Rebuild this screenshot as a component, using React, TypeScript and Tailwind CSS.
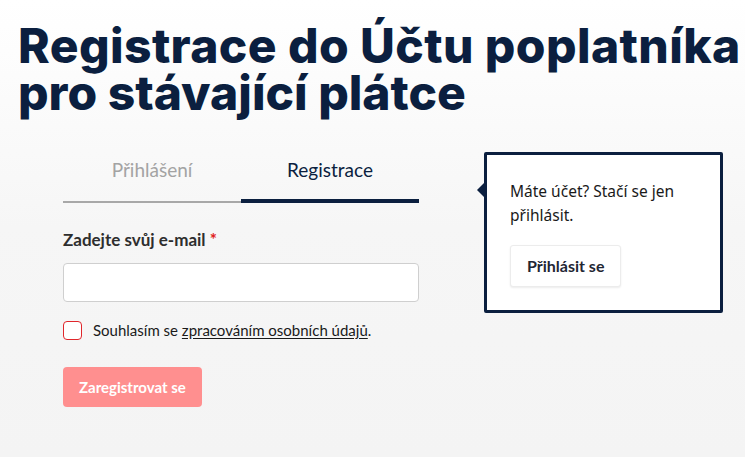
import React from 'react'

const navy = 'text-[#0b1f3f]'

const Tabs = () => {
  return (
    <div className="flex">
      <button className="relative w-[178px] h-[63px] flex items-center justify-center text-[19px] text-[#a3a3a3] border-b-2 border-[#a8a8a8]">
        Přihlášení
      </button>
      <button className="relative w-[178px] h-[63px] flex items-center justify-center text-[19px] text-[#0b1f3f] border-b-2 border-[#a8a8a8]">
        Registrace
        <span className="absolute left-0 right-0 -bottom-[2px] h-[4px] bg-[#0b1f3f]" />
      </button>
    </div>
  )
}

const RegisterForm = () => {
  return (
    <div className="w-[356px] font-['Lato',sans-serif]">
      <Tabs />
      <label className="block mt-[24px] text-[17px] leading-[26px] font-bold text-[#2e2e2e]">
        Zadejte svůj e-mail <span className="text-[#e0211b]">*</span>
      </label>
      <input
        type="email"
        className="mt-[10px] block w-full h-[39px] rounded-[4px] border border-[#cfcfcf] bg-white"
      />
      <div className="mt-[17px] h-[22px] flex items-center gap-[11px]">
        <span className="w-[19px] h-[19px] rounded-[4px] border border-[#e0262b] bg-white" />
        <p className="text-[15px] text-[#1a1a1a]">
          Souhlasím se <a className="underline underline-offset-2">zpracováním osobních údajů</a>.
        </p>
      </div>
      <button className="mt-[26px] h-[40px] px-[16px] rounded-[4px] bg-[#ff8f8f] text-white text-[15px] font-bold">
        Zaregistrovat se
      </button>
    </div>
  )
}

const LoginHint = () => {
  return (
    <div className="relative mt-[12px] w-[239px] h-[161px] border-[3px] border-[#0b1f3f] rounded-[2px] bg-white font-['Noto_Sans',sans-serif]">
      <svg className="absolute -left-[10px] top-[27px]" width="8" height="16" viewBox="0 0 8 16">
        <path d="M8 0 L0 8 L8 16 Z" fill="#0b1f3f" />
      </svg>
      <div className="pl-[23px] pt-[24px] pr-[12px]">
        <p className="text-[15.5px] leading-[24px] text-[#1a1a1a]">
          Máte účet? Stačí se jen přihlásit.
        </p>
        <button className="mt-[18px] h-[42px] px-[16px] rounded-[3px] bg-white border border-[#ececec] shadow-[0_1px_2px_rgba(0,0,0,0.08)] font-['Lato',sans-serif] text-[16px] font-bold text-[#1f2633]">
          Přihlásit se
        </button>
      </div>
    </div>
  )
}

export default function App() {
  return (
    <div className="min-h-screen w-full bg-gradient-to-b from-white via-[#f6f6f6] to-[#f4f4f4] overflow-hidden">
      <h1 className={`pl-[18px] pt-[22px] font-['Inter',sans-serif] font-extrabold text-[48px] leading-[47px] ${navy}`}>
        <span className="tracking-[0.4px]">Registrace do Účtu poplatníka</span>
        <br />
        pro stávající plátce
      </h1>
      <div className="flex pl-[63px] pt-[24px] gap-[65px]">
        <RegisterForm />
        <LoginHint />
      </div>
    </div>
  )
}
